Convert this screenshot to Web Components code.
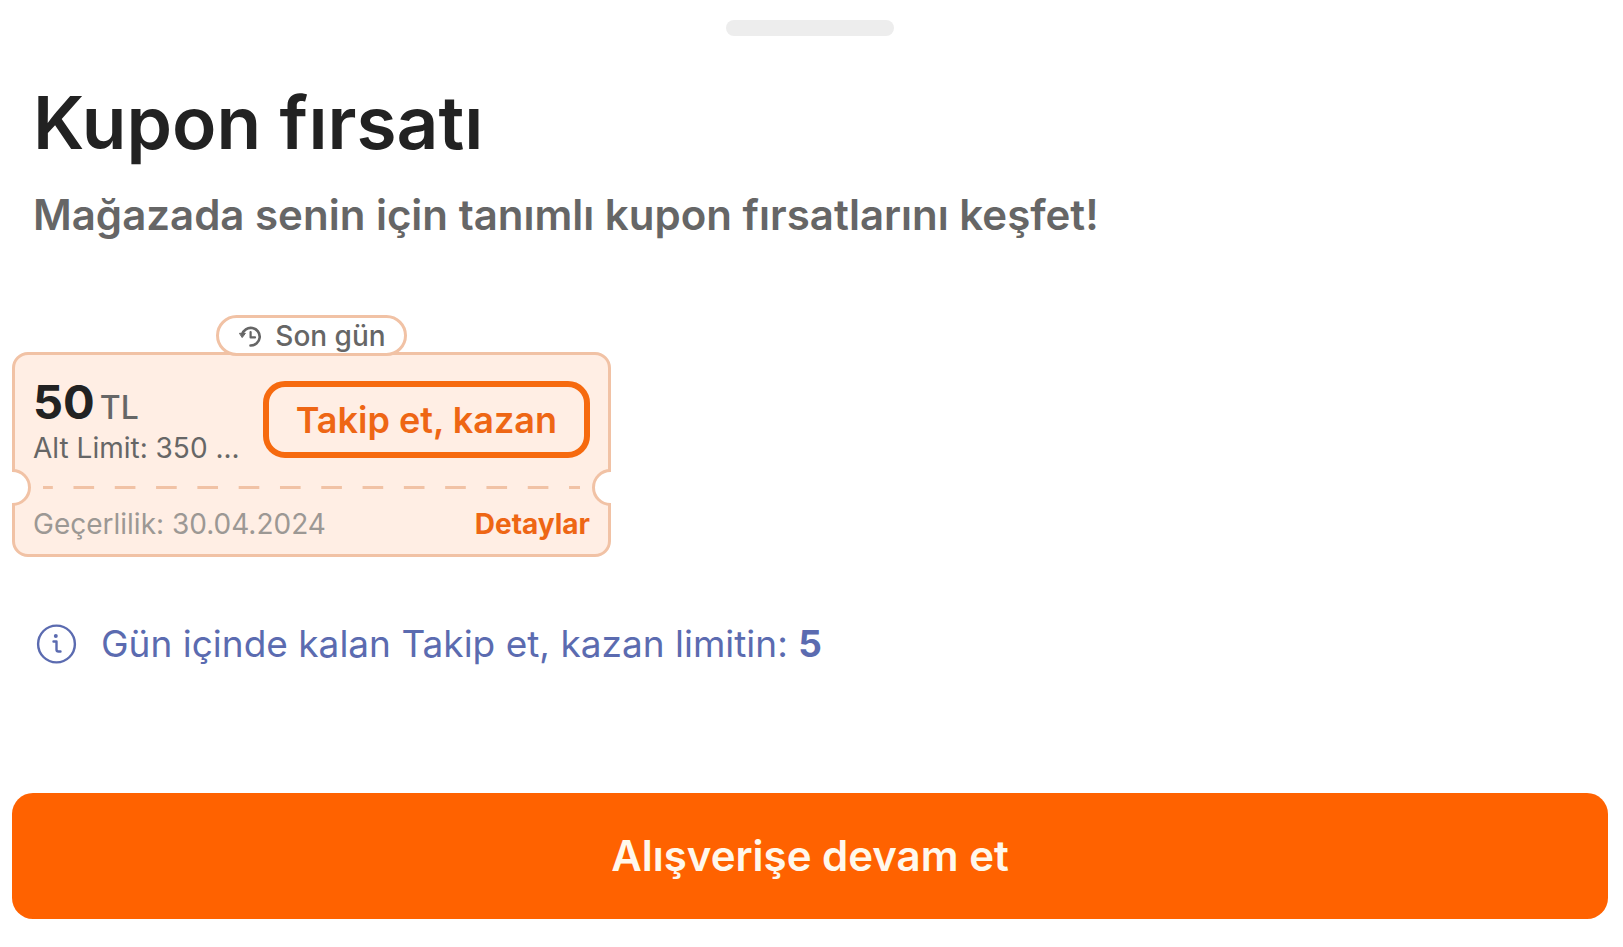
<!DOCTYPE html>
<html lang="tr">
<head>
<meta charset="utf-8">
<meta name="viewport" content="width=device-width, initial-scale=1">
<title>Kupon fırsatı</title>
<style>
  html, body { margin: 0; background: #fff; }
  body { font-family: Inter, "Liberation Sans", sans-serif; color: #222; }
</style>
</head>
<body>
<coupon-sheet>
  <span slot="title">Kupon fırsatı</span>
  <span slot="subtitle">Mağazada senin için tanımlı kupon fırsatlarını keşfet!</span>
  <coupon-card>
    <coupon-badge slot="badge">Son gün</coupon-badge>
    <span slot="amount">50</span>
    <span slot="currency">TL</span>
    <span slot="limit">Alt Limit: 350 ...</span>
    <span slot="action">Takip et, kazan</span>
    <span slot="validity">Geçerlilik: 30.04.2024</span>
    <span slot="details">Detaylar</span>
  </coupon-card>
  <info-note>Gün içinde kalan Takip et, kazan limitin: <b>5</b></info-note>
  <primary-button slot="footer">Alışverişe devam et</primary-button>
</coupon-sheet>

<script>
const define = (name, html) => {
  const template = document.createElement('template');
  template.innerHTML = html;
  customElements.define(name, class extends HTMLElement {
    constructor() {
      super();
      this.attachShadow({ mode: 'open' }).append(template.content.cloneNode(true));
    }
  });
};

define('coupon-sheet', `
  <style>
    :host { display: block; padding: 20px 15px 28px 12px; }
    .handle { width: 168px; height: 16px; margin: 0 auto; border-radius: 8px; background: #ededed; }
    header { padding: 39px 21px 0; }
    h1 { margin: 0; font-size: 73px; line-height: 96px; font-weight: 600; color: #222; }
    p { margin: 16px 0 0; font-size: 42px; line-height: 56px; font-weight: 600; color: #666; }
    .content { display: flex; flex-direction: column; align-items: flex-start; gap: 55px; margin: 72px 0 117px; }
  </style>
  <div class="handle"></div>
  <header>
    <h1><slot name="title"></slot></h1>
    <p><slot name="subtitle"></slot></p>
  </header>
  <div class="content"><slot></slot></div>
  <slot name="footer"></slot>
`);

define('coupon-badge', `
  <style>
    :host { display: flex; align-items: center; gap: 13px; box-sizing: border-box; height: 41px; padding: 0 18px 0 19px;
      border: 3px solid #f1c2a5; border-radius: 21px; background: #fff; color: #666;
      font-size: 28px; line-height: 32px; font-weight: 500; white-space: nowrap; }
    svg { display: block; }
  </style>
  <svg width="24" height="24" viewBox="0 0 24 24" fill="none" stroke="#666" stroke-width="2.600" stroke-linecap="round" stroke-linejoin="round" aria-hidden="true">
    <path d="M4 10.500a9 8.800 0 1 1 8.500 11"/>
    <path d="M1.800 9.300h5.600l-3 4z" fill="#666" stroke-width="1"/>
    <path d="M12.600 8v5.400h4.400" stroke-width="2.200"/>
  </svg>
  <slot></slot>
`);

define('coupon-card', `
  <style>
    :host { display: flex; flex-direction: column; align-items: center; width: 599px; max-width: 100%; }
    ::slotted(coupon-badge) { position: relative; z-index: 1; margin-bottom: -4px; }
    .ticket { box-sizing: border-box; width: 100%; border: 3px solid #f1c2a5; border-radius: 16px;
      background: #ffeee4; clip-path: inset(0); }
    .offer { display: flex; align-items: flex-start; justify-content: space-between; gap: 16px; padding: 26px 18px 0; }
    .value { min-width: 0; flex: 1; display: flex; flex-direction: column; gap: 6px; }
    .price { display: flex; align-items: baseline; gap: 5px; }
    .amount { font-size: 47px; line-height: 42px; font-weight: 700; color: #222; }
    .currency { font-size: 32px; line-height: 32px; font-weight: 500; color: #666; }
    .limit { overflow: hidden; white-space: nowrap; text-overflow: ellipsis; font-size: 28px; line-height: 36px; color: #666; }
    button { box-sizing: border-box; height: 77px; padding: 0 27px; border: 6px solid #f66a0f; border-radius: 22px; background: none;
      font: 600 36px/48px Inter, "Liberation Sans", sans-serif; color: #ee6614; white-space: nowrap; }
    .tear { position: relative; display: flex; align-items: center; height: 37px; margin-top: 3px; padding: 0 28px; }
    .tear::before, .tear::after { content: ""; position: absolute; top: 0; box-sizing: border-box; width: 37px; height: 37px;
      border: 3px solid #f1c2a5; border-radius: 50%; background: #fff; }
    .tear::before { left: -21px; }
    .tear::after { right: -21px; }
    .dashes { flex: 1; height: 3px; background: linear-gradient(90deg, #f1c2a5 25%, transparent 25% 75%, #f1c2a5 75%) 0 0 / calc(100% / 13) 100%; }
    .foot { display: flex; justify-content: space-between; padding: 0 18px 12px; font-size: 28px; line-height: 36px; color: #9c9894; }
    a { font-weight: 700; color: #ee6614; text-decoration: none; }
  </style>
  <slot name="badge"></slot>
  <div class="ticket">
    <div class="offer">
      <div class="value">
        <div class="price"><span class="amount"><slot name="amount"></slot></span><span class="currency"><slot name="currency"></slot></span></div>
        <div class="limit"><slot name="limit"></slot></div>
      </div>
      <button type="button"><slot name="action"></slot></button>
    </div>
    <div class="tear"><div class="dashes"></div></div>
    <div class="foot"><slot name="validity"></slot><a href="#detaylar"><slot name="details"></slot></a></div>
  </div>
`);

define('info-note', `
  <style>
    :host { display: flex; align-items: center; gap: 24px; padding: 8px 24px; font-size: 37px; line-height: 48px; color: #5b6bb0; }
    svg { display: block; flex: none; }
  </style>
  <svg width="41" height="40" viewBox="0 0 41 40" fill="none" stroke="#5b6bb0" stroke-width="2.400" stroke-linecap="round" stroke-linejoin="round" aria-hidden="true">
    <circle cx="20.500" cy="20" r="18.400"/>
    <circle cx="19.800" cy="12" r="2" fill="#5b6bb0" stroke="none"/>
    <path d="M17.500 17.500h3v8q0 2 2 2h2"/>
  </svg>
  <span><slot></slot></span>
`);

define('primary-button', `
  <style>
    :host { display: block; }
    button { display: block; width: 100%; padding: 35px 24px; border: 0; border-radius: 21px; background: #ff6200;
      font: 600 42px/56px Inter, "Liberation Sans", sans-serif; color: #fff8ec; }
  </style>
  <button type="button"><slot></slot></button>
`);
</script>
</body>
</html>
